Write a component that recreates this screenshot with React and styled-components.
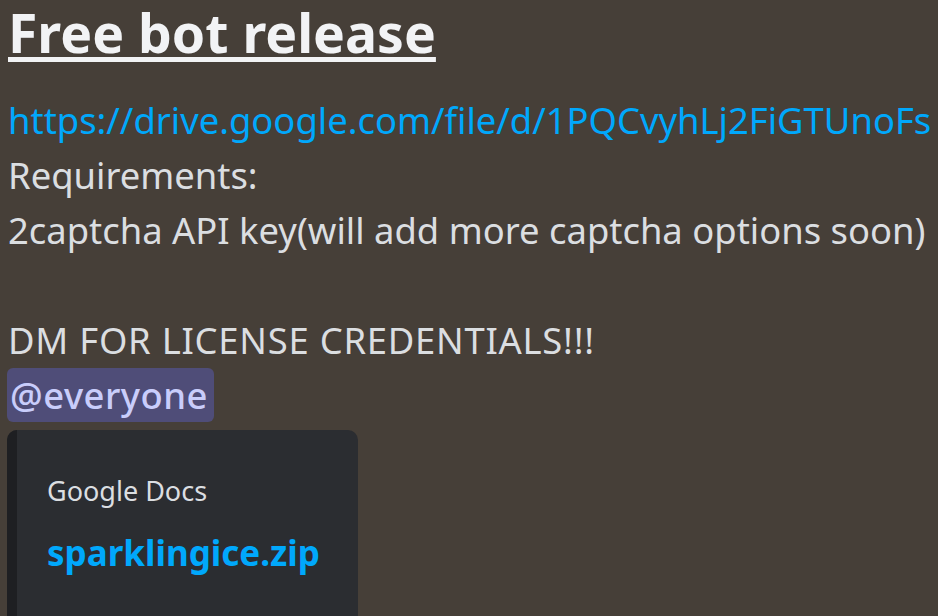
import React from 'react';
import styled, { createGlobalStyle } from 'styled-components';

const GlobalStyle = createGlobalStyle`
  html, body {
    margin: 0;
    padding: 0;
    background: #463f38;
    overflow: hidden;
  }
`;

const Page = styled.div`
  width: 938px;
  height: 616px;
  overflow: hidden;
  padding: 0 0 0 8px;
  box-sizing: border-box;
  font-family: 'Noto Sans', 'Open Sans', sans-serif;
  color: #dbdee1;
`;

const Heading = styled.h1`
  margin: 0;
  font-size: 53.5px;
  line-height: 66px;
  font-weight: 700;
  color: #f2f3f5;
  text-decoration: underline;
  text-decoration-thickness: 5px;
  text-underline-offset: 4px;
  white-space: nowrap;
`;

const Body = styled.div`
  margin-top: 27px;
  font-size: 36.4px;
  line-height: 55px;
  white-space: nowrap;
`;

const Line = styled.div`
  height: 55px;
  letter-spacing: ${(p) => (p.$caps ? '0.75px' : 'normal')};
`;

const Link = styled.a`
  color: #00a8fc;
  text-decoration: none;
`;

const Mention = styled.span`
  display: inline-block;
  vertical-align: top;
  margin: 0 0 0 -1px;
  padding: 0 6px 0 3px;
  background: #4f4d78;
  color: #c9cdfb;
  border-radius: 6px;
  line-height: 54px;
  font-weight: 500;
  letter-spacing: 0.5px;
`;

const Embed = styled.div`
  display: flex;
  width: 351px;
  height: 200px;
  margin: 7px 0 0 -1px;
  background: #2b2d31;
  border-radius: 10px;
  overflow: hidden;
`;

const EmbedBar = styled.div`
  flex: none;
  width: 10px;
  background: #1e1f22;
`;

const EmbedContent = styled.div`
  display: flex;
  flex-direction: column;
  padding: 44px 0 0 30px;
`;

const Provider = styled.div`
  font-size: 27px;
  line-height: 34px;
  color: #dbdee1;
`;

const Title = styled.a`
  margin-top: 23px;
  font-size: 35px;
  line-height: 44px;
  font-weight: 700;
  color: #00a8fc;
  text-decoration: none;
`;

export default function App() {
  return (
    <>
      <GlobalStyle />
      <Page>
        <Heading>Free bot release</Heading>
        <Body>
          <Line>
            <Link href="#">https://drive.google.com/file/d/1PQCvyhLj2FiGTUnoFs</Link>
          </Line>
          <Line>Requirements:</Line>
          <Line>2captcha API key(will add more captcha options soon)</Line>
          <Line />
          <Line $caps>DM FOR LICENSE CREDENTIALS!!!</Line>
          <Line>
            <Mention>@everyone</Mention>
          </Line>
        </Body>
        <Embed>
          <EmbedBar />
          <EmbedContent>
            <Provider>Google Docs</Provider>
            <Title href="#">sparklingice.zip</Title>
          </EmbedContent>
        </Embed>
      </Page>
    </>
  );
}
